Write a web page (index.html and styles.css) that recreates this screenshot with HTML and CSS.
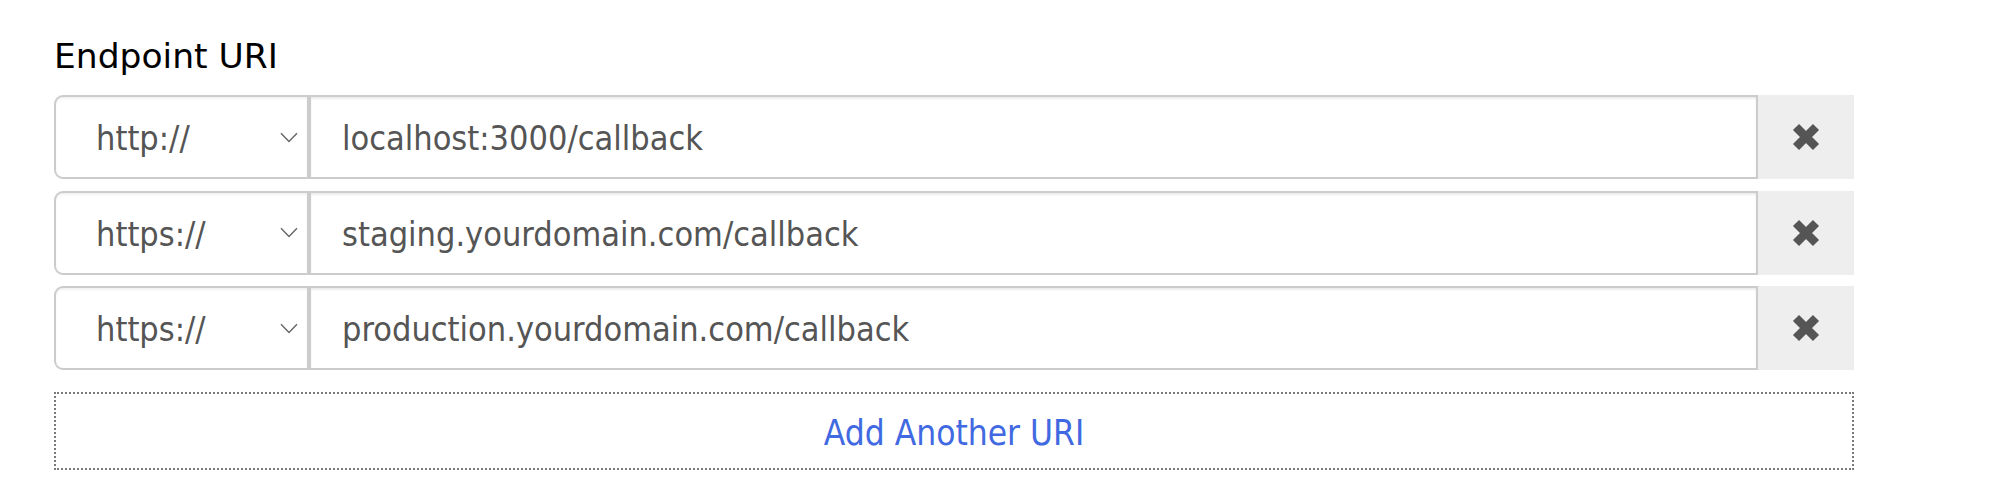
FILE: index.html
```html
<!DOCTYPE html>
<html lang="en">
<head>
<meta charset="utf-8">
<title>Endpoint URI</title>
<link rel="stylesheet" href="styles.css">
</head>
<body>
<div class="field">
  <div class="field-label">Endpoint URI</div>
  <div class="uri-list">
    <div class="uri-row">
      <div class="scheme">
        <span class="scheme-text">http://</span>
        <svg class="chevron" width="18" height="11" viewBox="0 0 18 11" aria-hidden="true"><path d="M1 1.2 L9 9.5 L17 1.2" fill="none" stroke="#666" stroke-width="1.4"/></svg>
      </div>
      <div class="host">localhost:3000/callback</div>
      <div class="remove">
        <svg width="30" height="30" viewBox="0 0 30 30" aria-hidden="true"><path d="M5 5 L25 25 M25 5 L5 25" stroke="#555" stroke-width="8.6" stroke-linecap="butt"/></svg>
      </div>
    </div>
    <div class="uri-row">
      <div class="scheme">
        <span class="scheme-text">https://</span>
        <svg class="chevron" width="18" height="11" viewBox="0 0 18 11" aria-hidden="true"><path d="M1 1.2 L9 9.5 L17 1.2" fill="none" stroke="#666" stroke-width="1.4"/></svg>
      </div>
      <div class="host">staging.yourdomain.com/callback</div>
      <div class="remove">
        <svg width="30" height="30" viewBox="0 0 30 30" aria-hidden="true"><path d="M5 5 L25 25 M25 5 L5 25" stroke="#555" stroke-width="8.6" stroke-linecap="butt"/></svg>
      </div>
    </div>
    <div class="uri-row">
      <div class="scheme">
        <span class="scheme-text">https://</span>
        <svg class="chevron" width="18" height="11" viewBox="0 0 18 11" aria-hidden="true"><path d="M1 1.2 L9 9.5 L17 1.2" fill="none" stroke="#666" stroke-width="1.4"/></svg>
      </div>
      <div class="host">production.yourdomain.com/callback</div>
      <div class="remove">
        <svg width="30" height="30" viewBox="0 0 30 30" aria-hidden="true"><path d="M5 5 L25 25 M25 5 L5 25" stroke="#555" stroke-width="8.6" stroke-linecap="butt"/></svg>
      </div>
    </div>
  </div>
  <div class="add-uri">Add Another URI</div>
</div>
</body>
</html>
```

FILE: styles.css
```css
html, body {
  margin: 0;
  padding: 0;
  background: #fff;
}

.field {
  padding: 36px 0 0 54px;
  width: 1800px;
}

.field-label {
  font-family: "DejaVu Sans", Verdana, sans-serif;
  font-size: 34.5px;
  line-height: 40px;
  color: #000;
  margin-bottom: 19px;
}

.uri-list {
  display: flex;
  flex-direction: column;
  gap: 11.5px;
}

.uri-row {
  display: flex;
  height: 84px;
}

.scheme {
  box-sizing: border-box;
  width: 255px;
  height: 84px;
  border: 2px solid #ccc;
  border-radius: 9px 0 0 9px;
  background: #fff;
  box-shadow: inset 0 2px 2px rgba(0, 0, 0, 0.05);
  display: flex;
  align-items: center;
  justify-content: space-between;
  padding: 2px 9px 0 40px;
  font-family: "DejaVu Sans Condensed", Tahoma, sans-serif;
  font-size: 34px;
  line-height: 40px;
  color: #555;
}

.chevron {
  display: block;
  margin-top: -2px;
}

.host {
  box-sizing: border-box;
  flex: 1;
  height: 84px;
  border: 2px solid #ccc;
  background: #fff;
  box-shadow: inset 0 2px 2px rgba(0, 0, 0, 0.075);
  display: flex;
  align-items: center;
  padding: 2px 0 0 31px;
  font-family: "DejaVu Sans Condensed", Tahoma, sans-serif;
  font-size: 34px;
  line-height: 40px;
  color: #555;
}

.remove {
  width: 96px;
  height: 84px;
  background: #eee;
  display: flex;
  align-items: center;
  justify-content: center;
}

.remove svg {
  display: block;
}

.add-uri {
  box-sizing: border-box;
  margin-top: 22px;
  height: 78px;
  border: 2px dotted #7a7a7a;
  display: flex;
  align-items: center;
  justify-content: center;
  padding-top: 4px;
  font-family: "DejaVu Sans Condensed", Tahoma, sans-serif;
  font-size: 35px;
  line-height: 40px;
  color: #4169e1;
}
```
